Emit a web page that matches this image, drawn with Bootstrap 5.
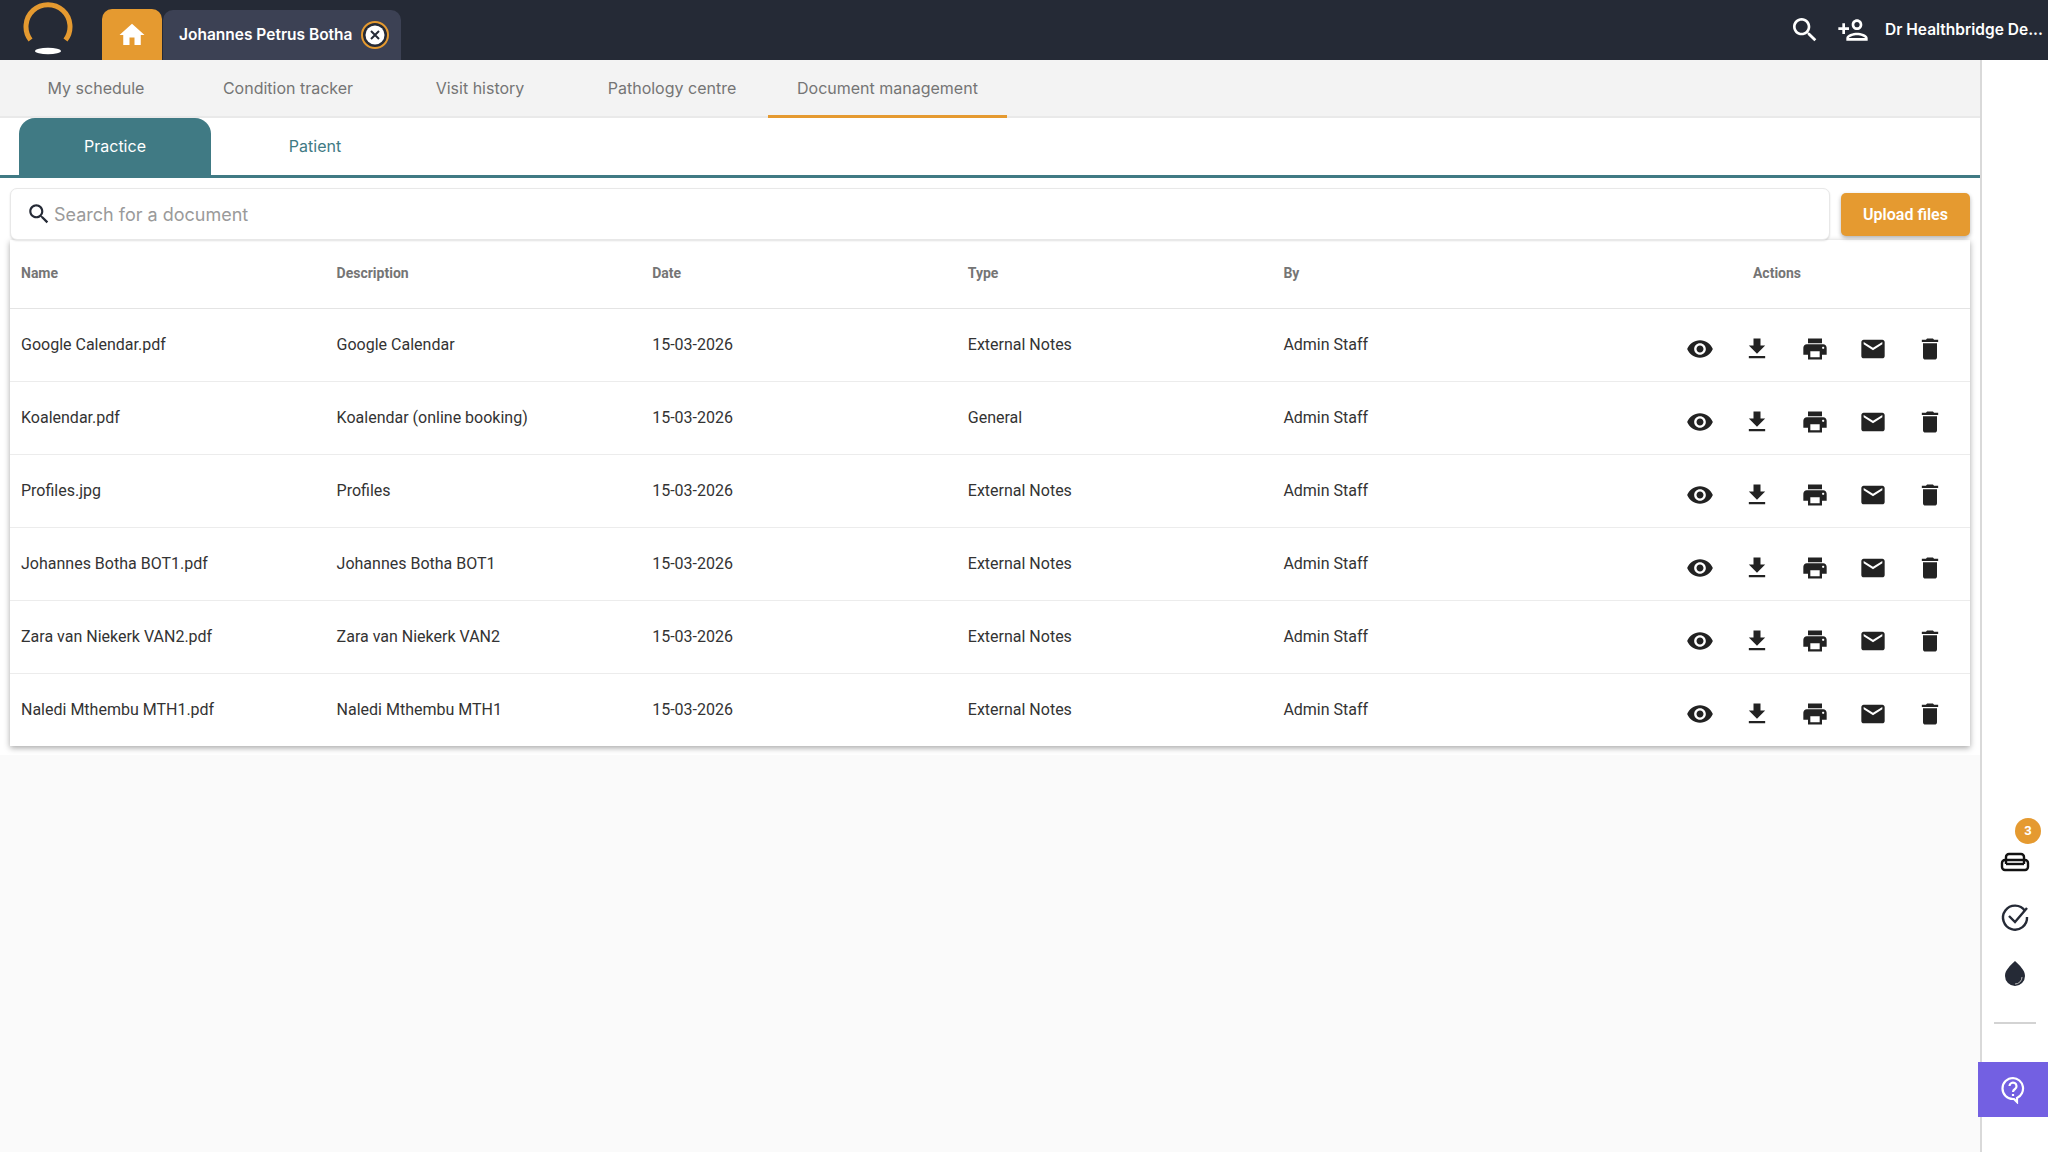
<!DOCTYPE html>
<html lang="en">
<head>
<meta charset="utf-8">
<title>Document management</title>
<link href="https://cdn.jsdelivr.net/npm/bootstrap@5.3.0/dist/css/bootstrap.min.css" rel="stylesheet">
<style>
html,body{height:100%}
body{font-family:"Inter","Noto Sans",sans-serif;background:#fff;overflow:hidden}
.app-top{height:60px;background:#252a36;color:#fff;flex:none}
.logo-wrap{width:102px;padding-left:23px}
.home-tab{width:60px;height:51px;background:#e59a30;border-radius:10px 10px 0 0;margin-top:9px}
.pat-tab{width:238px;height:50px;background:#3c4154;border-radius:10px 10px 0 0;margin:10px 0 0 1px;padding-left:16px;font-weight:600;font-size:15.5px}
.close-dot{width:28px;height:28px;margin-left:8px}
.user-name{font-weight:600;font-size:15.5px;width:163px;white-space:nowrap}
.app-body{height:1092px}
.main-col{width:1982px;flex:none;border-right:2px solid #d9d9d9;background:#fafafa}
.mod-nav{height:58px;background:#f3f3f3;border-bottom:2px solid #e9e9e9}
.mod-nav .nav-link{min-width:192px;height:58px;padding:0 29px;color:#757575;font-size:16px;line-height:56px;text-align:center}
.mod-nav .nav-link.active{border-bottom:3px solid #e59a30}
.sub-tabs{height:60px;background:#fff;border-bottom:3px solid #407a84;padding-left:19px}
.sub-tabs .nav-link{width:192px;height:57px;line-height:57px;padding:0;text-align:center;color:#407a84;font-size:16px;border-radius:16px 16px 0 0}
.sub-tabs .nav-link.active{background:#407a84;color:#fff}
.sub-tabs .nav-item+.nav-item{margin-left:8px}
.content-pane{background:#fff;padding:10px 10px 9px}
.search-row{height:52px}
.search-box{width:1820px;height:52px;border:1px solid #e8e8e8;border-radius:7px;padding-left:15px;background:#fff;box-shadow:0 1px 2px rgba(0,0,0,.12)}
.search-box input{border:0;outline:0;padding:0;margin-left:2px;width:1500px;font-size:18px;color:#333;background:transparent}
.search-box input::placeholder{color:#9a9a9a;opacity:1}
.btn-upload{width:129px;height:43px;margin:5px 0 0 11px;padding:0;background:#e59a30;color:#fff;font-weight:600;font-size:16px;border:0;border-radius:5px;box-shadow:0 2px 4px rgba(0,0,0,.3);font-family:"Roboto",sans-serif}
.btn-upload:hover{background:#e59a30;color:#fff}
.doc-sheet{background:#fff;box-shadow:0 2px 6px rgba(0,0,0,.35)}
.doc-table{table-layout:fixed;width:1960px;font-family:"Roboto",sans-serif;margin:0}
.doc-table col.c-a{width:315.6px}
.doc-table th{height:68px;padding:0 11px;vertical-align:middle;color:#757575;font-size:14px;font-weight:700;border-bottom:1px solid #e4e4e4}
.doc-table td{height:73px;padding:0 11px;vertical-align:middle;color:#333;font-size:16px;border-bottom:1px solid #ececec}
.doc-table tr:last-child td{border-bottom:0}
.doc-table th.act-h{text-align:center;padding-right:15px}
.act-set{display:flex;justify-content:flex-end;padding-top:8px}
.act-ico{width:57.6px;height:28px;display:flex;justify-content:center}
.act-ico svg{width:28px;height:28px;fill:#222}
.rail-col{width:66px;flex:none;padding-bottom:35px}
.rail-ico{width:32px;height:32px;position:relative}
.rail-badge{position:absolute;top:-27px;right:-10px;width:26px;height:26px;border-radius:50%;background:#e59a30;color:#fff;font-size:13px;font-weight:700;font-family:"Roboto",sans-serif;line-height:26px;text-align:center}
.rail-rule{width:42px;height:2px;background:#d3d3d3;border:0;opacity:1;margin:33px 0 38px}
.help-box{width:70px;height:55px;margin-left:-4px;background:#7360e2;flex:none;align-self:flex-start}
</style>
</head>
<body class="d-flex flex-column">
<header class="app-top d-flex align-items-start">
  <div class="logo-wrap">
    <svg width="52" height="56" viewBox="0 0 52 56"><path d="M7.5 40A22 22 0 1 1 42.500 40" transform="translate(0 0)" fill="none" stroke="#e59a30" stroke-width="5"/><ellipse cx="25" cy="51" rx="13" ry="3.200" fill="#fff"/></svg>
  </div>
  <div class="home-tab d-flex align-items-center justify-content-center">
    <svg width="30" height="30" viewBox="0 0 24 24" fill="#fff"><path d="M10 20v-6h4v6h5v-8h3L12 3 2 12h3v8z"/></svg>
  </div>
  <div class="pat-tab d-flex align-items-center">
    <span>Johannes Petrus Botha</span>
    <svg class="close-dot" viewBox="0 0 28 28"><circle cx="14" cy="14" r="13" fill="#252a36" stroke="#e59a30" stroke-width="2"/><circle cx="14" cy="14" r="9.500" fill="#fff"/><path d="M10 10l8 8M18 10l-8 8" stroke="#252a36" stroke-width="2"/></svg>
  </div>
  <div class="ms-auto d-flex align-items-center h-100">
    <svg width="32" height="32" viewBox="0 0 24 24" fill="#fff"><path d="M15.500 14h-.79l-.28-.27C15.410 12.590 16 11.110 16 9.500 16 5.910 13.090 3 9.500 3S3 5.910 3 9.500 5.910 16 9.500 16c1.610 0 3.090-.59 4.230-1.570l.27.28v.79l5 4.990L20.490 19l-4.990-5zm-6 0C7.010 14 5 11.990 5 9.500S7.010 5 9.500 5 14 7.010 14 9.500 11.990 14 9.500 14z"/></svg>
    <svg class="ms-3" width="32" height="32" viewBox="0 0 24 24" fill="#fff"><path d="M15 12c2.210 0 4-1.790 4-4s-1.790-4-4-4-4 1.790-4 4 1.790 4 4 4zm0-6c1.100 0 2 .9 2 2s-.9 2-2 2-2-.9-2-2 .9-2 2-2zm0 8c-2.670 0-8 1.340-8 4v2h16v-2c0-2.660-5.330-4-8-4zm-6 4c.22-.72 3.310-2 6-2 2.700 0 5.800 1.290 6 2H9zm-3-3v-3h3v-2H6V7H4v3H1v2h3v3h2z"/></svg>
    <div class="user-name ms-3">Dr Healthbridge De...</div>
  </div>
</header>

<div class="app-body d-flex">
  <main class="main-col d-flex flex-column">
    <ul class="nav mod-nav flex-nowrap flex-none">
      <li class="nav-item"><a class="nav-link" href="#">My schedule</a></li>
      <li class="nav-item"><a class="nav-link" href="#">Condition tracker</a></li>
      <li class="nav-item"><a class="nav-link" href="#">Visit history</a></li>
      <li class="nav-item"><a class="nav-link" href="#">Pathology centre</a></li>
      <li class="nav-item"><a class="nav-link active" href="#">Document management</a></li>
    </ul>
    <ul class="nav sub-tabs">
      <li class="nav-item"><a class="nav-link active" href="#">Practice</a></li>
      <li class="nav-item"><a class="nav-link" href="#">Patient</a></li>
    </ul>
    <section class="content-pane">
      <div class="search-row d-flex">
        <div class="search-box d-flex align-items-center">
          <svg width="26" height="26" viewBox="0 0 24 24" fill="#252a36"><path d="M15.500 14h-.79l-.28-.27C15.410 12.590 16 11.110 16 9.500 16 5.910 13.090 3 9.500 3S3 5.910 3 9.500 5.910 16 9.500 16c1.610 0 3.090-.59 4.230-1.570l.27.28v.79l5 4.990L20.490 19l-4.990-5zm-6 0C7.010 14 5 11.990 5 9.500S7.010 5 9.500 5 14 7.010 14 9.500 11.990 14 9.500 14z"/></svg>
          <input type="text" placeholder="Search for a document" aria-label="Search for a document">
        </div>
        <button class="btn btn-upload" type="button">Upload files</button>
      </div>
      <div class="doc-sheet">
        <table class="doc-table">
          <colgroup><col class="c-a"><col class="c-a"><col class="c-a"><col class="c-a"><col class="c-a"><col></colgroup>
          <thead><tr><th>Name</th><th>Description</th><th>Date</th><th>Type</th><th>By</th><th class="act-h">Actions</th></tr></thead>
          <tbody id="rows"></tbody>
        </table>
      </div>
    </section>
  </main>
  <aside class="rail-col d-flex flex-column align-items-center justify-content-end">
    <div class="rail-ico mb-4">
      <svg width="32" height="32" viewBox="0 0 32 32" fill="none" stroke="#111" stroke-width="2.400"><path d="M7 19v-7a3 3 0 0 1 3-3h12a3 3 0 0 1 3 3v7"/><rect x="3" y="15" width="26" height="10" rx="3"/><path d="M7 19h18"/></svg>
      <span class="rail-badge">3</span>
    </div>
    <div class="rail-ico mb-4">
      <svg width="32" height="32" viewBox="0 0 32 32" fill="none" stroke="#252a36" stroke-width="2.400"><path d="M26 10a12 12 0 1 0 2 6"/><path d="M10 15l6 6 12-14"/></svg>
    </div>
    <div class="rail-ico">
      <svg width="32" height="32" viewBox="0 0 32 32"><path d="M16 4c5 5 10 9 10 15a10 10 0 0 1-20 0c0-6 5-10 10-15z" fill="#252a36"/><path d="M23 20a7 7 0 0 1-7 7" fill="none" stroke="#bbb" stroke-width="1"/></svg>
    </div>
    <hr class="rail-rule">
    <div class="help-box d-flex align-items-center justify-content-center">
      <svg width="26" height="28" viewBox="0 0 26 28" fill="none" stroke="#fff" stroke-width="2.200"><path d="M13 2a10.500 10.500 0 1 0 0 21h1l3 3v-4A10.500 10.500 0 0 0 13 2z"/><path d="M9.500 10a3.500 3.500 0 1 1 5.500 3c-1.300.9-2 1.500-2 3"/><path d="M13 18v2"/></svg>
    </div>
  </aside>
</div>

<script>
var data=[["Google Calendar.pdf","Google Calendar","External Notes"],["Koalendar.pdf","Koalendar (online booking)","General"],["Profiles.jpg","Profiles","External Notes"],["Johannes Botha BOT1.pdf","Johannes Botha BOT1","External Notes"],["Zara van Niekerk VAN2.pdf","Zara van Niekerk VAN2","External Notes"],["Naledi Mthembu MTH1.pdf","Naledi Mthembu MTH1","External Notes"]];
var icons=["M12 4.500C7 4.500 2.730 7.610 1 12c1.730 4.390 6 7.500 11 7.500s9.270-3.110 11-7.500c-1.730-4.390-6-7.500-11-7.500zM12 17c-2.760 0-5-2.240-5-5s2.240-5 5-5 5 2.240 5 5-2.240 5-5 5zm0-8c-1.660 0-3 1.340-3 3s1.340 3 3 3 3-1.340 3-3-1.340-3-3-3z","M19 9h-4V3H9v6H5l7 7 7-7zM5 18v2h14v-2H5z","M19 8H5c-1.660 0-3 1.340-3 3v6h4v4h12v-4h4v-6c0-1.660-1.340-3-3-3zm-3 11H8v-5h8v5zm3-7c-.55 0-1-.45-1-1s.45-1 1-1 1 .45 1 1-.45 1-1 1zm-1-9H6v4h12V3z","M20 4H4c-1.100 0-1.990.9-1.990 2L2 18c0 1.100.9 2 2 2h16c1.100 0 2-.9 2-2V6c0-1.100-.9-2-2-2zm0 4l-8 5-8-5V6l8 5 8-5v2z","M6 19c0 1.100.9 2 2 2h8c1.100 0 2-.9 2-2V7H6v12zM19 4h-3.500l-1-1h-5l-1 1H5v2h14V4z"];
var acts='<div class="act-set">'+icons.map(function(p){return '<span class="act-ico"><svg viewBox="0 0 24 24"><path d="'+p+'"/></svg></span>'}).join('')+'</div>';
document.getElementById('rows').innerHTML=data.map(function(r){return '<tr><td>'+r[0]+'</td><td>'+r[1]+'</td><td>15-03-2026</td><td>'+r[2]+'</td><td>Admin Staff</td><td>'+acts+'</td></tr>'}).join('');
</script>
<script src="https://cdn.jsdelivr.net/npm/bootstrap@5.3.0/dist/js/bootstrap.bundle.min.js"></script>
</body>
</html>
